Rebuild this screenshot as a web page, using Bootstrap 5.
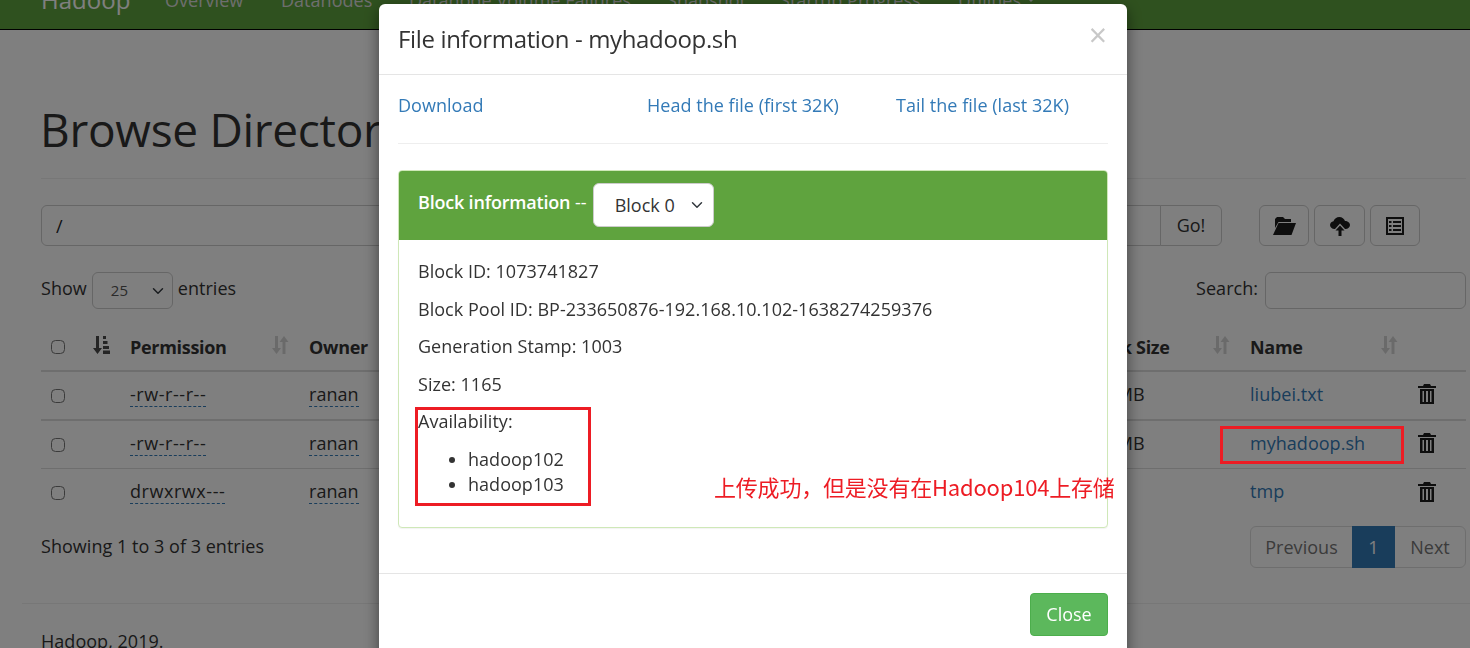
<!DOCTYPE html>
<html lang="en">
<head>
<meta charset="utf-8">
<title>Browsing HDFS</title>
<link href="https://cdn.jsdelivr.net/npm/bootstrap@5.3.0/dist/css/bootstrap.min.css" rel="stylesheet">
<style>
html,body{height:648px;overflow:hidden}
body{font-family:"Open Sans","Noto Sans CJK SC",sans-serif;font-size:18px;letter-spacing:.03px;color:#333;background:#fff}
.hd-nav{height:30px;background:#5fa33e;border-bottom:1px solid #000;overflow:hidden;padding:0 0 0 41px;align-items:flex-end;flex-wrap:nowrap;justify-content:flex-start}
.hd-nav a{color:#ddd;text-decoration:none;white-space:nowrap;line-height:24px;margin-bottom:17px}
.hd-brand{font-size:24px;color:#fff!important;width:124px}
.hd-item{font-size:18px}
.hd-page{padding:0 4px 0 41px}
.hd-title{font-size:46px;font-weight:400;line-height:56px;letter-spacing:-.3px;color:#333;margin:0;padding:71px 0 21px;border-bottom:1px solid #eee;text-indent:-1px}
.hd-path{margin-top:26px;gap:37px;align-items:stretch}
.hd-path .input-group{width:1181px;flex:none}
.hd-path .form-control,.hd-path .btn{height:41px;font-size:18px;border-color:#ccc}
.hd-path .form-control{padding-left:14px}
.hd-path .input-group .btn{width:62px;padding:0;flex:none;color:#333}
.hd-tools{gap:5px}
.hd-tools .btn{width:50px;padding:0;display:flex;align-items:center;justify-content:center;border:1px solid #ccc}
.hd-tools .btn:nth-child(2){width:51px}
.hd-tools svg{fill:#1c1c1c}
.hd-ic-a{width:24px;height:20px}
.hd-ic-b{width:20px;height:20px}
.hd-ic-c{width:18px;height:20px}
.hd-filter{margin-top:26px;height:37px;align-items:center}
.hd-lift{padding-bottom:4px}
.hd-len{width:81px;height:37px;font-size:15px;padding:0 0 0 18px;margin:0 5px 0 5px;border-color:#ccc;background-position:right 6px center;color:#555}
.hd-search{width:201px;height:37px;margin-left:7px;border-color:#ccc}
.hd-table{table-layout:fixed;width:1425px;margin:19px 0 0;--bs-table-bg:transparent;--bs-table-color:#333;border-color:#ddd}
.hd-table th,.hd-table td{padding:0 10px;vertical-align:middle;border-bottom:1px solid #ddd;font-size:18px}
.hd-table thead th{height:43px;border-bottom:2px solid #ddd;padding-bottom:4px;letter-spacing:-.3px;font-weight:700;white-space:nowrap}
.hd-table tbody tr{height:48.5px}
.hd-table tbody td{padding-bottom:2px}
.hd-table tbody tr:nth-child(1) td{border-bottom-width:2px}
.hd-table tbody tr:last-child td{border-bottom:0}
.hd-table td.hd-size{padding-left:7px}
.hd-th{display:flex;justify-content:space-between;align-items:center}
.hd-th svg{width:18px;height:20px;margin-top:-4px;flex:none}
.hd-sortoff{fill:#333;opacity:.2}
.hd-check{width:14px;height:14px;margin:0;border-color:#767676;border-radius:3px;vertical-align:middle}
.hd-dot{border-bottom:1px dashed #337ab7;color:#333}
.hd-perm{letter-spacing:.55px}
.hd-link{color:#337ab7;text-decoration:none}
.hd-trash{width:18px;height:20px;fill:#1c1c1c;display:block}
.hd-foot{margin-top:9px;align-items:center;height:42px}
.hd-foot .page-link{font-size:18px;height:42px;line-height:26px;padding:7px 15px;color:#777;border-color:#ddd}
.hd-foot .pagination{--bs-pagination-border-radius:6px}
.hd-foot .page-item:first-child .page-link{width:103px;text-align:center;padding:7px 0}
.hd-foot .page-item:last-child .page-link{width:72px;text-align:center;padding:7px 0}
.hd-foot .active .page-link{background:#337ab7;border-color:#337ab7;color:#fff;width:43px;padding:7px 0;text-align:center}
.hd-hr{margin:35px -4px 0 -19px;border-top:1px solid #eee}
.hd-copy{margin-top:24px;line-height:26px}
.hd-dialog{width:748px;max-width:none;margin:4px 0 0 379px}
.hd-dialog .modal-content{border:0;border-radius:6px;height:680px;box-shadow:0 5px 15px rgba(0,0,0,.5)}
.hd-dialog .modal-header{height:71px;padding:0 19px;border-bottom:1px solid #e5e5e5;align-items:center}
.hd-dialog .modal-title{font-size:24px;font-weight:400;line-height:30px;letter-spacing:-.35px;color:#333;margin-top:-1px}
.hd-x{background:none;border:0;padding:0;font-size:32px;line-height:1;color:#c8c8c8;font-weight:400;margin-top:-9px;margin-right:1px}
.hd-dialog .modal-body{padding:0 19px;height:498px;flex:none}
.hd-links{height:69px;align-items:center;border-bottom:1px solid #eee;padding-bottom:8px;margin-bottom:26px}
.hd-links a{color:#337ab7;text-decoration:none}
.hd-l1{width:249px}.hd-l2{width:249px}
.hd-card{border-color:#cfe8b8;border-radius:4px;box-shadow:0 1px 1px rgba(0,0,0,.05);height:358px}
.hd-card .card-header{height:69px;background:#5fa33e;border:0;color:#fff;padding:0 19px;display:flex;align-items:center;border-radius:3px 3px 0 0;font-size:18px}
.hd-cap{padding-bottom:7px;white-space:pre}
.hd-cap b{font-weight:600;letter-spacing:-.2px}
.hd-card .form-select{width:121px;height:44px;margin-left:6px;margin-top:-1px;font-size:18px;padding:0 0 0 21px;color:#333;font-weight:400;background-position:right 8px center;border-color:#ccc}
.hd-card .card-body{padding:17px 19px 0}
.hd-card p{margin:0 0 9.6px;line-height:28px}
.hd-card ul{margin:0;line-height:25px;padding-left:50px;margin-top:12px}
.hd-dialog .modal-footer{border-top:1px solid #e5e5e5;padding:19px;justify-content:flex-end;display:flex;align-items:flex-start}
.hd-close{width:78px;height:43px;background:#5cb85c;border:1px solid #4cae4c;color:#fff;font-size:18px;padding:0;margin:0;border-radius:4px}
.hd-mark{position:absolute;border:3px solid #ed1c24;pointer-events:none}
.hd-note{position:absolute;left:714px;top:471px;color:#ed1c24;font-size:22px;line-height:30px;letter-spacing:-.2px;font-family:"Noto Sans CJK SC","Open Sans",sans-serif;white-space:nowrap}
.hd-over{position:fixed;inset:0;z-index:1060;pointer-events:none}
</style>
</head>
<body>
<nav class="navbar hd-nav">
  <a class="hd-brand" href="#">Hadoop</a>
  <a class="hd-item" href="#" style="width:116px">Overview</a>
  <a class="hd-item" href="#" style="width:128px">Datanodes</a>
  <a class="hd-item" href="#" style="width:258px">Datanode Volume Failures</a>
  <a class="hd-item" href="#" style="width:113px">Snapshot</a>
  <a class="hd-item" href="#" style="width:178px">Startup Progress</a>
  <a class="hd-item dropdown-toggle" href="#">Utilities</a>
</nav>

<main class="hd-page">
  <h1 class="hd-title">Browse Directory</h1>

  <div class="d-flex hd-path">
    <div class="input-group">
      <input class="form-control" type="text" value="/">
      <button class="btn btn-light bg-white" type="button">Go!</button>
    </div>
    <div class="d-flex hd-tools">
      <button class="btn btn-light bg-white" type="button" aria-label="Create directory">
        <svg class="hd-ic-a" viewBox="0 0 24 20"><path d="M5 1h6l2 2h6v3H6.500L3 12V3z"/><path d="M6.500 7H24l-4.500 12H1z"/></svg>
      </button>
      <button class="btn btn-light bg-white" type="button" aria-label="Upload">
        <svg class="hd-ic-b" viewBox="0 0 20 20"><path d="M5 13H4.500C2 13 0 11.200 0 9c0-2 1.500-3.500 3.500-3.800C4.300 2.700 6.700 1 9.300 1c2.800 0 5 1.700 5.700 4 2.800 0 5 1.800 5 4s-2 4-4.500 4H15L10 7.500z"/><path d="M10 9.500 14.500 14.500H11.500V20H8.500V14.500H5.500z"/></svg>
      </button>
      <button class="btn btn-light bg-white" type="button" aria-label="Cut paste">
        <svg class="hd-ic-c" viewBox="0 0 18 20"><path fill-rule="evenodd" d="M0 1h18v18H0zM2 3v14h14V3zM3 5h2.500v2H3zm4 0h8v2H7zM3 9h2.500v2H3zm4 0h8v2H7zM3 13h2.500v2H3zm4 0h8v2H7z"/></svg>
      </button>
    </div>
  </div>

  <div class="d-flex justify-content-between hd-filter">
    <div class="d-flex align-items-center"><span class="hd-lift">Show</span>
      <select class="form-select hd-len"><option>25</option></select> <span class="hd-lift">entries</span></div>
    <div class="d-flex align-items-center"><span class="hd-lift">Search:</span><input class="form-control hd-search" type="text"></div>
  </div>

  <table class="table hd-table">
    <colgroup>
      <col style="width:79px"><col style="width:179px"><col style="width:150px"><col style="width:150px">
      <col style="width:125px"><col style="width:190px"><col style="width:160px"><col style="width:166px">
      <col style="width:168px"><col style="width:58px">
    </colgroup>
    <thead>
      <tr>
        <th><div class="hd-th"><input class="form-check-input hd-check" type="checkbox" aria-label="Select all">
          <svg viewBox="0 0 18 20" fill="#4a4a4a"><path d="M4 1h3v12h3l-4.500 6L1 13h3z"/><path d="M11 1h3v3h-3zM11 6h4.500v3H11zM11 11h6v3h-6zM11 15.500h7V19h-7z"/></svg></div></th>
        <th><div class="hd-th">Permission<svg class="hd-sortoff" viewBox="0 0 18 20"><path d="M4 1h3v12h3l-4.500 6L1 13h3z"/><path d="M13 1l4.500 6h-3v12h-3V7h-3z"/></svg></div></th>
        <th>Owner</th>
        <th></th><th></th><th></th><th></th>
        <th><div class="hd-th">Block Size<svg class="hd-sortoff" viewBox="0 0 18 20"><path d="M4 1h3v12h3l-4.500 6L1 13h3z"/><path d="M13 1l4.500 6h-3v12h-3V7h-3z"/></svg></div></th>
        <th><div class="hd-th">Name<svg class="hd-sortoff" viewBox="0 0 18 20"><path d="M4 1h3v12h3l-4.500 6L1 13h3z"/><path d="M13 1l4.500 6h-3v12h-3V7h-3z"/></svg></div></th>
        <th></th>
      </tr>
    </thead>
    <tbody>
      <tr>
        <td><input class="form-check-input hd-check" type="checkbox" aria-label="Select"></td>
        <td><span class="hd-dot hd-perm">-rw-r--r--</span></td>
        <td><span class="hd-dot">ranan</span></td><td></td><td></td><td></td><td></td>
        <td class="text-nowrap hd-size">128 MB</td>
        <td><a class="hd-link" href="#">liubei.txt</a></td>
        <td><svg class="hd-trash" viewBox="0 0 18 20"><path fill-rule="evenodd" d="M6 0h6l1 2h5v2H0V2h5zM2 5h14v15H2zM4.500 7v11h1.500V7zm3.500 0v11h2V7zm4 0v11h1.500V7z"/></svg></td>
      </tr>
      <tr>
        <td><input class="form-check-input hd-check" type="checkbox" aria-label="Select"></td>
        <td><span class="hd-dot hd-perm">-rw-r--r--</span></td>
        <td><span class="hd-dot">ranan</span></td><td></td><td></td><td></td><td></td>
        <td class="text-nowrap hd-size">128 MB</td>
        <td><a class="hd-link" href="#">myhadoop.sh</a></td>
        <td><svg class="hd-trash" viewBox="0 0 18 20"><path fill-rule="evenodd" d="M6 0h6l1 2h5v2H0V2h5zM2 5h14v15H2zM4.500 7v11h1.500V7zm3.500 0v11h2V7zm4 0v11h1.500V7z"/></svg></td>
      </tr>
      <tr>
        <td><input class="form-check-input hd-check" type="checkbox" aria-label="Select"></td>
        <td><span class="hd-dot hd-perm">drwxrwx---</span></td>
        <td><span class="hd-dot">ranan</span></td><td></td><td></td><td></td><td></td><td></td>
        <td><a class="hd-link" href="#">tmp</a></td>
        <td><svg class="hd-trash" viewBox="0 0 18 20"><path fill-rule="evenodd" d="M6 0h6l1 2h5v2H0V2h5zM2 5h14v15H2zM4.500 7v11h1.500V7zm3.500 0v11h2V7zm4 0v11h1.500V7z"/></svg></td>
      </tr>
    </tbody>
  </table>

  <div class="d-flex justify-content-between hd-foot">
    <div class="pb-0">Showing 1 to 3 of 3 entries</div>
    <ul class="pagination mb-0">
      <li class="page-item disabled"><a class="page-link bg-transparent" href="#">Previous</a></li>
      <li class="page-item active"><a class="page-link" href="#">1</a></li>
      <li class="page-item disabled"><a class="page-link bg-transparent" href="#">Next</a></li>
    </ul>
  </div>

  <div class="hd-hr"></div>
  <div class="hd-copy">Hadoop, 2019.</div>
</main>

<div class="modal-backdrop show"></div>

<div class="modal d-block" tabindex="-1" style="overflow:hidden">
  <div class="modal-dialog hd-dialog">
    <div class="modal-content">
      <div class="modal-header">
        <h4 class="modal-title">File information - myhadoop.sh</h4>
        <button class="hd-x" type="button" aria-label="Close">×</button>
      </div>
      <div class="modal-body">
        <div class="d-flex hd-links">
          <a class="hd-l1" href="#">Download</a>
          <a class="hd-l2" href="#">Head the file (first 32K)</a>
          <a href="#">Tail the file (last 32K)</a>
        </div>
        <div class="card hd-card">
          <div class="card-header"><span class="hd-cap"><b>Block information</b> --</span>
            <select class="form-select"><option>Block 0</option></select>
          </div>
          <div class="card-body">
            <p>Block ID: 1073741827</p>
            <p>Block Pool ID: BP-233650876-192.168.10.102-1638274259376</p>
            <p>Generation Stamp: 1003</p>
            <p>Size: 1165</p>
            <p>Availability:</p>
            <ul>
              <li>hadoop102</li>
              <li>hadoop103</li>
            </ul>
          </div>
        </div>
      </div>
      <div class="modal-footer">
        <button class="btn hd-close" type="button">Close</button>
      </div>
    </div>
  </div>
</div>

<div class="hd-over">
  <div class="hd-mark" style="left:415px;top:407px;width:176px;height:99px"></div>
  <div class="hd-mark" style="left:1220px;top:426px;width:184px;height:38px"></div>
  <div class="hd-note">上传成功，但是没有在Hadoop104上存储</div>
</div>

<script src="https://cdn.jsdelivr.net/npm/bootstrap@5.3.0/dist/js/bootstrap.bundle.min.js"></script>
</body>
</html>
